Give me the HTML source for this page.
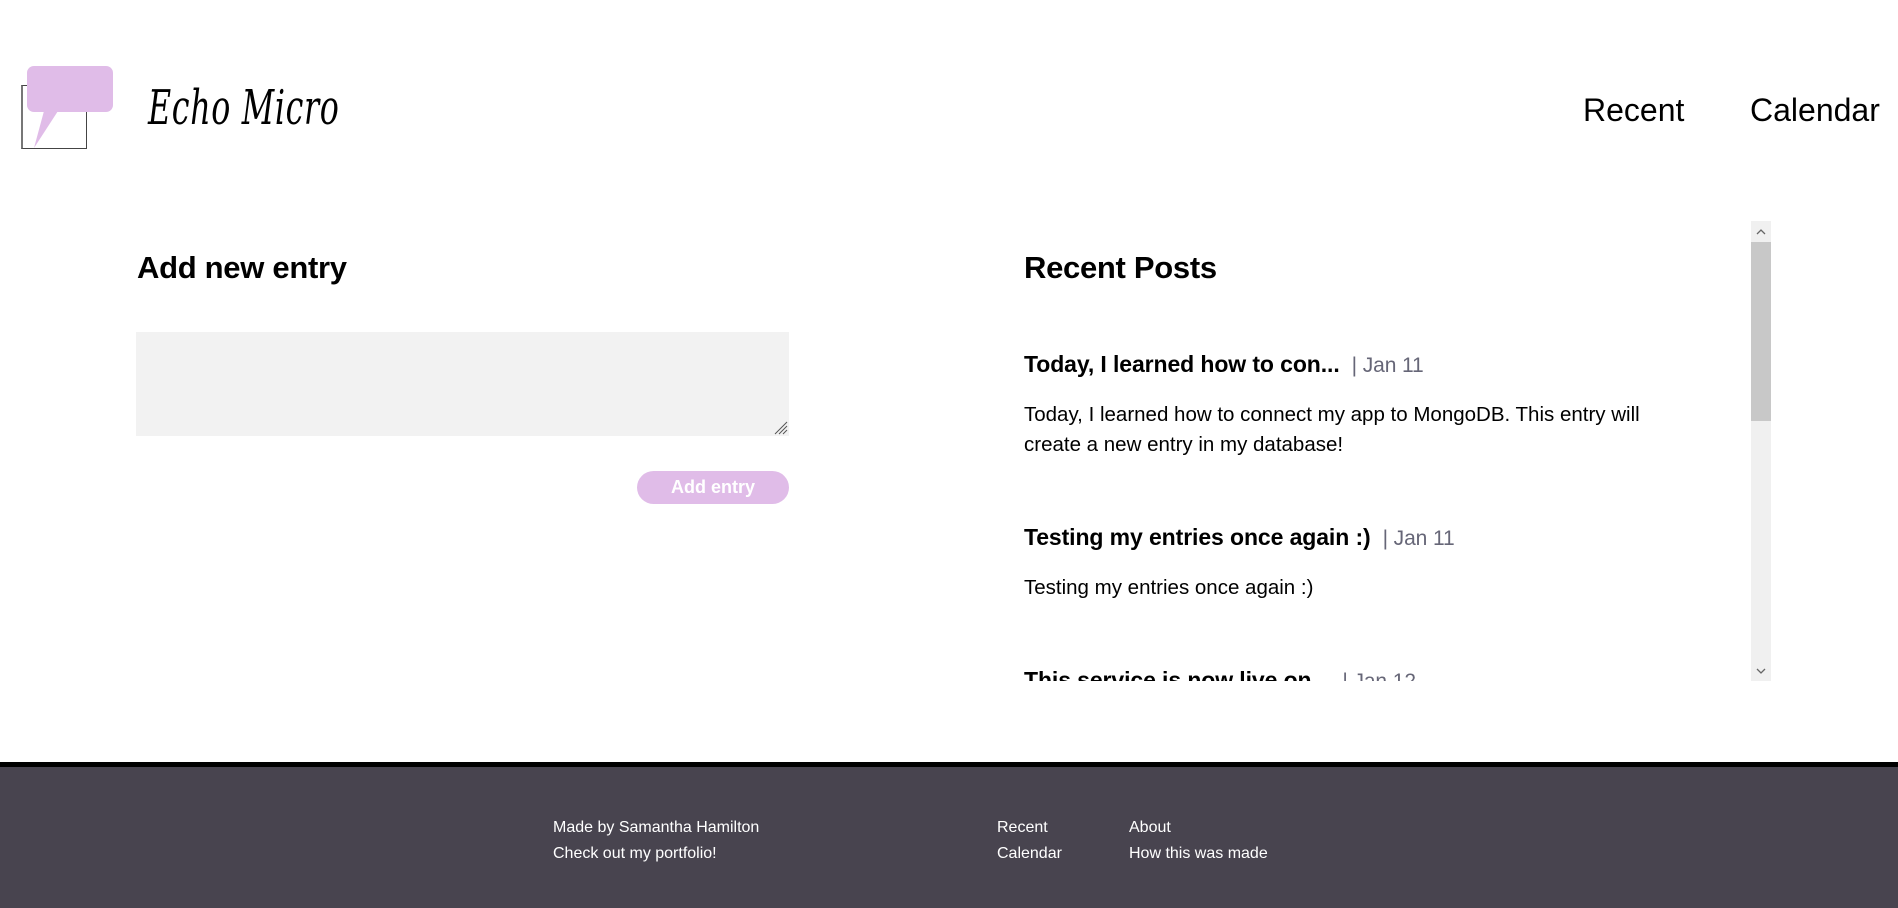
<!DOCTYPE html>
<html><head><meta charset="utf-8"><style>
*{margin:0;padding:0;box-sizing:border-box}
body{width:1898px;height:908px;overflow:hidden;background:#fff;font-family:"Liberation Sans",sans-serif;position:relative;color:#000}
.a{position:absolute;white-space:nowrap}
.nav{font-size:32px;top:92px}
h2{position:absolute;font-size:31px;font-weight:bold;letter-spacing:-0.3px}
.pt{font-size:23px;font-weight:bold;letter-spacing:-0.1px}
.pt span{font-weight:normal;color:#667;font-size:21px}
.pb{font-size:20.5px;line-height:30px}
.f{color:#fff;font-size:16px}
</style></head><body>
<div class="a" style="left:21px;top:85px;width:66px;height:64px;border:1px solid #444;border-left:2px solid #777"></div>
<svg class="a" style="left:0;top:0" width="120" height="160"><rect x="27" y="66" width="86" height="46" rx="7" fill="#e0bce8"/><polygon points="44,111 58,111 34,148" fill="#e0bce8"/></svg>
<div class="a" style="left:148px;top:80px;font-family:'DejaVu Serif',serif;font-style:italic;font-size:48px;transform:scaleX(0.66);transform-origin:left;letter-spacing:1px">Echo Micro</div>
<div class="a nav" style="left:1583px">Recent</div>
<div class="a nav" style="left:1750px">Calendar</div>
<h2 style="left:137px;top:250px">Add new entry</h2>
<div class="a" style="left:136px;top:332px;width:653px;height:104px;background:#f2f2f2"></div>
<svg class="a" style="left:772px;top:419px" width="16" height="16"><path d="M15 3L3 15M15 7L7 15M15 11L11 15" stroke="#555" stroke-width="1"/></svg>
<div class="a" style="left:637px;top:471px;width:152px;height:33px;background:#e0bce8;border-radius:17px;color:#fff;font-weight:bold;font-size:18px;text-align:center;line-height:33px">Add entry</div>
<h2 style="left:1024px;top:250px">Recent Posts</h2>
<div style="position:absolute;left:1024px;top:221px;width:720px;height:460px;overflow:hidden">
<div class="a pt" style="top:130px">Today, I learned how to con... <span>&nbsp;| Jan 11</span></div>
<div class="a pb" style="top:179px;white-space:normal;width:640px">Today, I learned how to connect my app to MongoDB. This entry will create a new entry in my database!</div>
<div class="a pt" style="top:303px">Testing my entries once again :) <span>&nbsp;| Jan 11</span></div>
<div class="a pb" style="top:352px">Testing my entries once again :)</div>
<div class="a pt" style="top:446px">This service is now live on... <span>&nbsp;| Jan 12</span></div>
</div>
<div class="a" style="left:1751px;top:221px;width:20px;height:460px;background:#f0f0f0"></div>
<div class="a" style="left:1751px;top:242px;width:20px;height:179px;background:#c8c8c8"></div>
<svg class="a" style="left:1751px;top:221px" width="20" height="460"><path d="M6 13L10 9L14 13M6 448L10 452L14 448" stroke="#666" fill="none" stroke-width="1.3"/></svg>
<div class="a" style="left:0;top:762px;width:1898px;height:146px;background:#48444f;border-top:5px solid #000"></div>
<div class="a f" style="left:553px;top:819px">Made by Samantha Hamilton</div>
<div class="a f" style="left:553px;top:845px">Check out my portfolio!</div>
<div class="a f" style="left:997px;top:819px">Recent</div>
<div class="a f" style="left:997px;top:845px">Calendar</div>
<div class="a f" style="left:1129px;top:819px">About</div>
<div class="a f" style="left:1129px;top:845px">How this was made</div>
</body></html>
